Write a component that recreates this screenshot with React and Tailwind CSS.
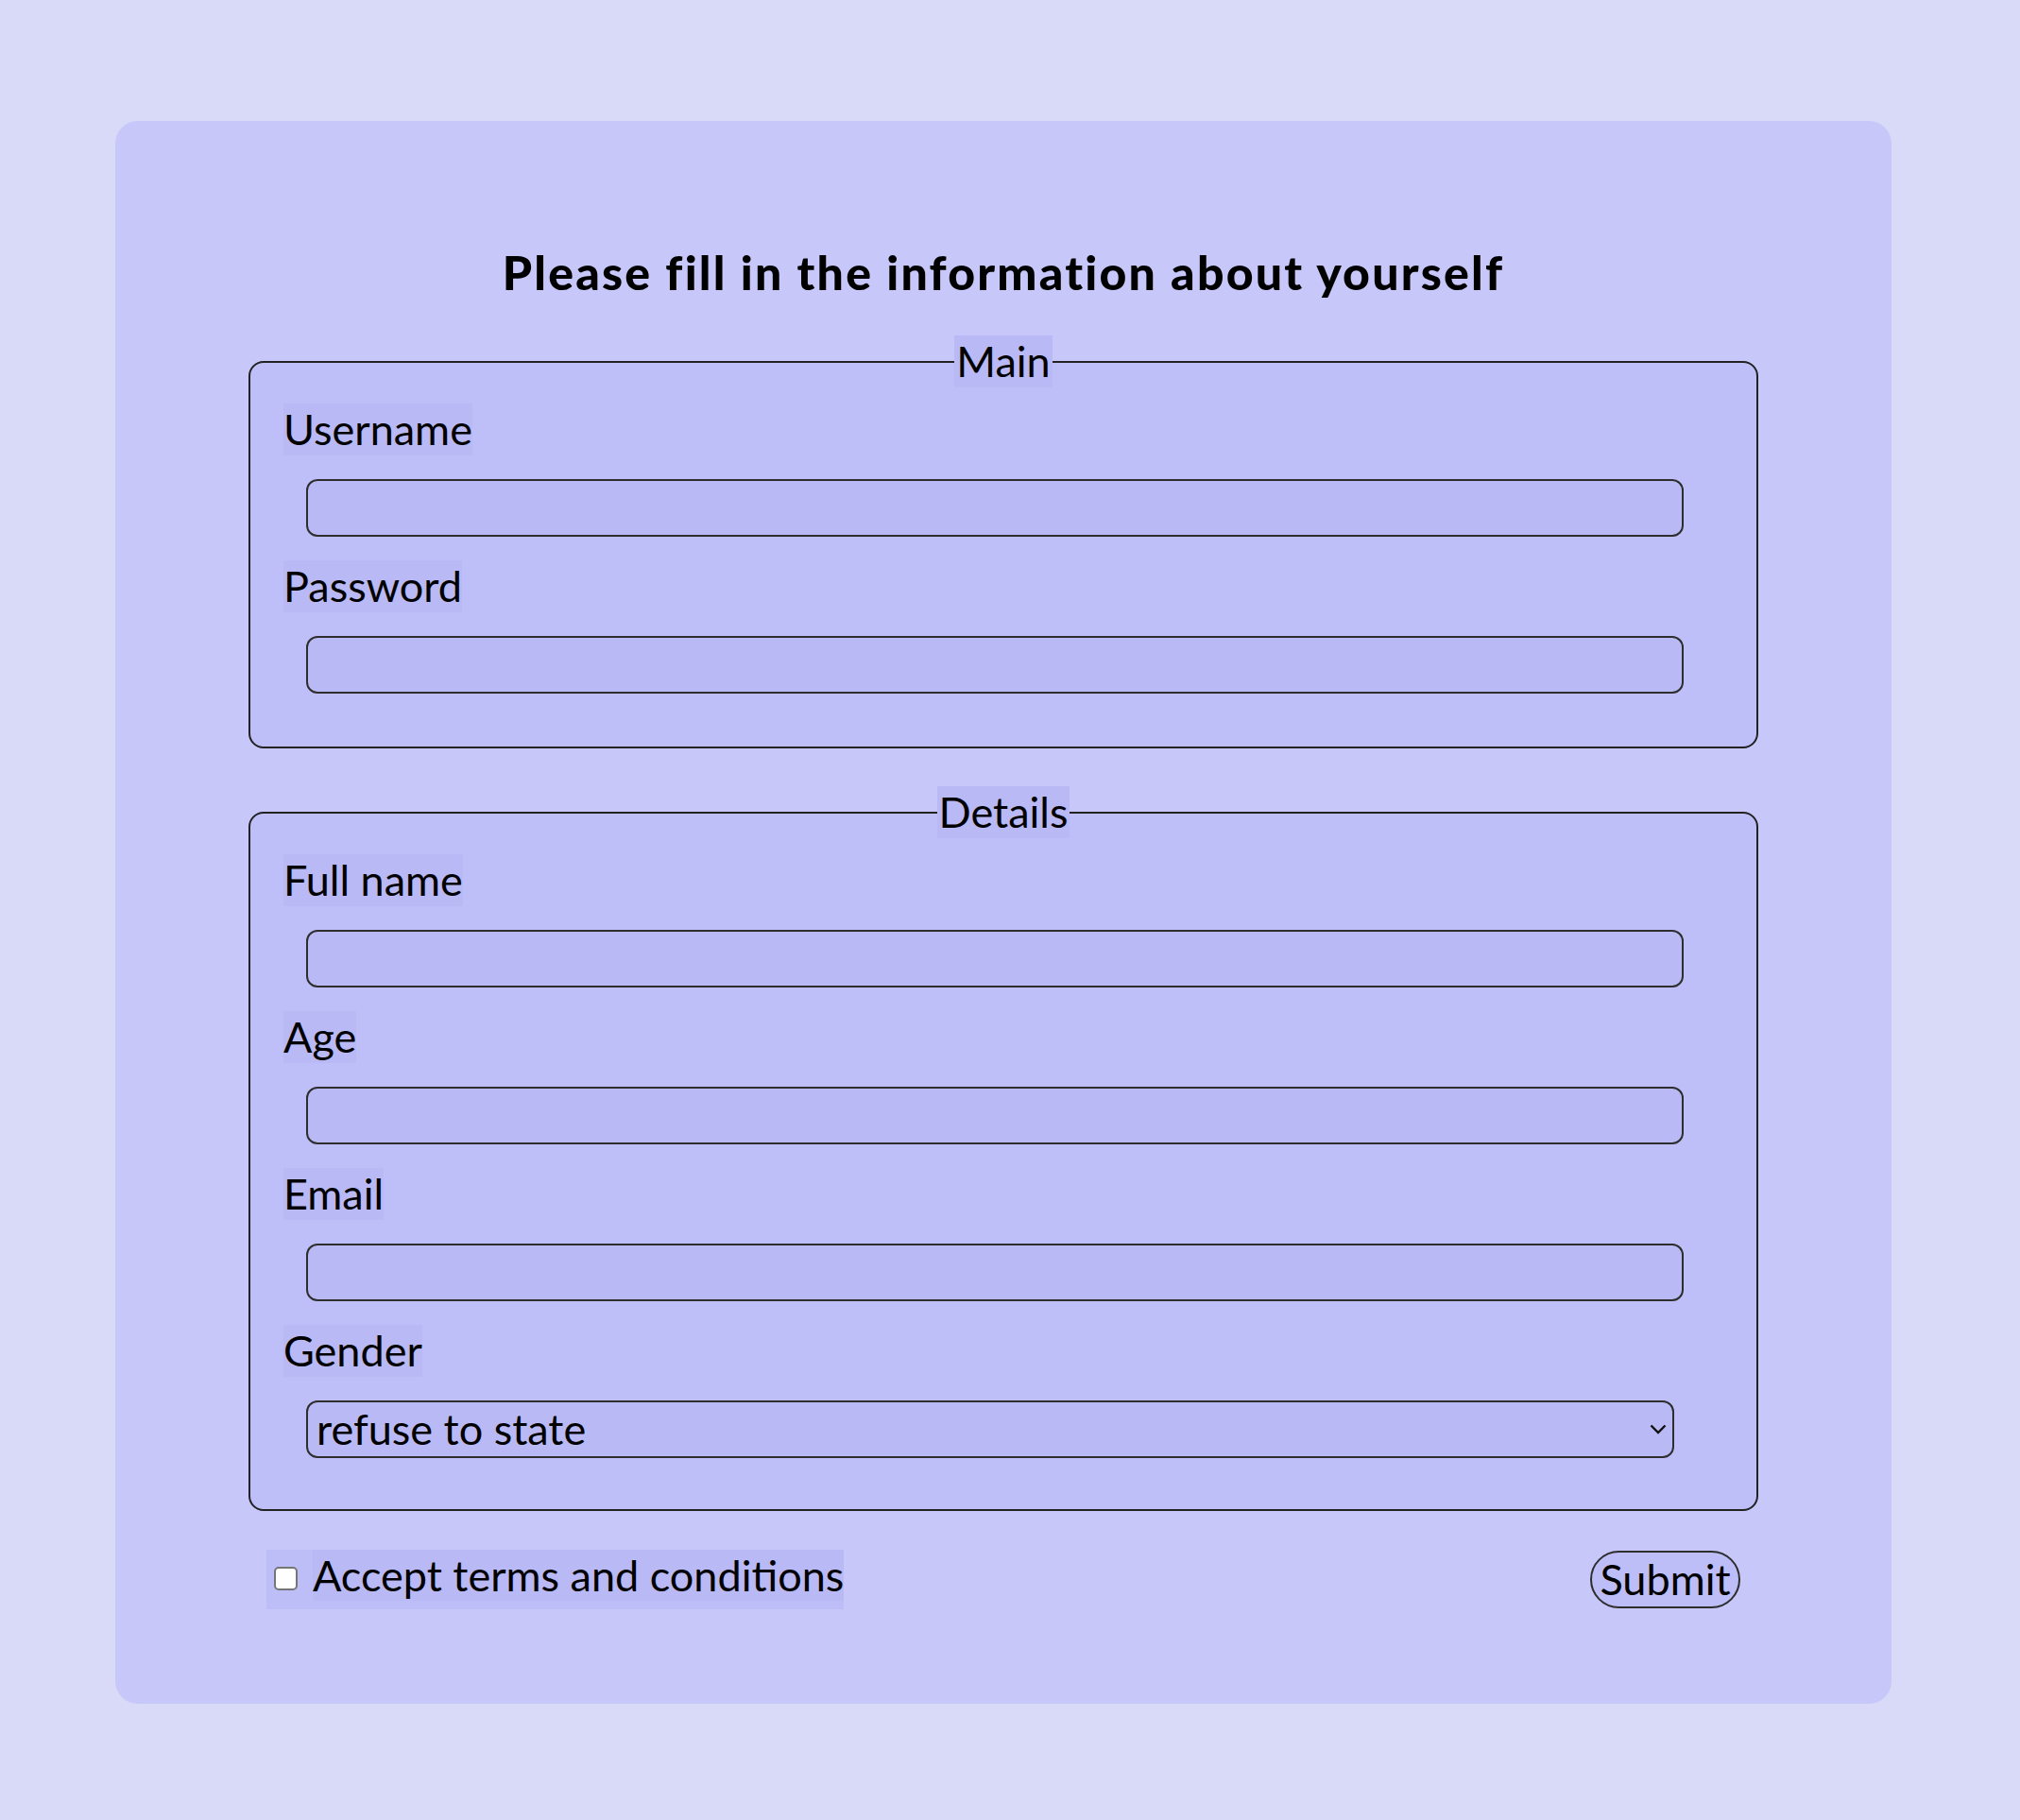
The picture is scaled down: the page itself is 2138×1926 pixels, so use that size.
import React from "react";

const Label = ({ children }) => (
  <label className="block w-fit bg-[#b8b9f5] text-[45px] leading-[55px] text-black">
    {children}
  </label>
);

const TextInput = ({ type = "text" }) => (
  <input
    type={type}
    className="block mt-[25px] ml-[24px] w-[1458px] h-[61px] rounded-[12px] border-2 border-[#2e2e2e] bg-[#b9baf5] outline-none"
  />
);

export default function App() {
  return (
    <div className="min-h-[1926px] w-full bg-[#d9d9f8] pt-[128px] font-['Lato',sans-serif] text-black">
      <div className="ml-[122px] w-[1880px] rounded-[24px] bg-[#c7c7f9] px-[141px] pt-[130px] pb-[100px]">
        <h2 className="text-center text-[50px] leading-[60px] font-black tracking-[2.2px]">
          Please fill in the information about yourself
        </h2>

        <fieldset className="mt-[37px] rounded-[16px] border-2 border-[#222] bg-[#bebff8] pl-[35px] pr-[35px] pt-[17px] pb-[56px]">
          <legend className="mx-auto bg-[#b8b9f5] px-[2px] text-[45px] leading-[55px]">
            Main
          </legend>
          <Label>Username</Label>
          <TextInput />
          <div className="mt-[25px]">
            <Label>Password</Label>
          </div>
          <TextInput type="password" />
        </fieldset>

        <fieldset className="mt-[40px] rounded-[16px] border-2 border-[#222] bg-[#bebff8] pl-[35px] pr-[35px] pt-[17px] pb-[54px]">
          <legend className="mx-auto bg-[#b8b9f5] px-[2px] text-[45px] leading-[55px]">
            Details
          </legend>
          <Label>Full name</Label>
          <TextInput />
          <div className="mt-[25px]">
            <Label>Age</Label>
          </div>
          <TextInput type="number" />
          <div className="mt-[25px]">
            <Label>Email</Label>
          </div>
          <TextInput type="email" />
          <div className="mt-[25px]">
            <Label>Gender</Label>
          </div>
          <div className="relative mt-[25px] ml-[24px] w-[1448px]">
            <select
              defaultValue="refuse"
              className="block w-full h-[61px] appearance-none rounded-[12px] border-2 border-[#2e2e2e] bg-[#b9baf5] pl-[9px] text-[45px] leading-[55px] outline-none font-['Lato',sans-serif]"
            >
              <option value="male">male</option>
              <option value="female">female</option>
              <option value="refuse">refuse to state</option>
            </select>
            <svg
              className="pointer-events-none absolute right-[8px] top-[25px]"
              width="18"
              height="11"
              viewBox="0 0 18 11"
              fill="none"
            >
              <path d="M1.5 1.5 L9 9 L16.5 1.5" stroke="#111" strokeWidth="2.4" />
            </svg>
          </div>
        </fieldset>

        <div className="mt-[41px] flex items-center justify-between px-[19px]">
          <div className="flex items-start bg-[#bdbef8] pl-[8px] pb-[9px]">
            <input
              type="checkbox"
              className="mt-[18px] h-[25px] w-[25px] appearance-none rounded-[5px] border-2 border-[#767676] bg-white"
            />
            <span className="ml-[16px] bg-[#b8b9f5] text-[45px] leading-[54px]">
              Accept terms and conditions
            </span>
          </div>
          <button className="h-[61px] w-[159px] rounded-full border-2 border-[#2e2e2e] bg-[#bdbef8] text-[45px] leading-[55px] font-['Lato',sans-serif]">
            Submit
          </button>
        </div>
      </div>
    </div>
  );
}
